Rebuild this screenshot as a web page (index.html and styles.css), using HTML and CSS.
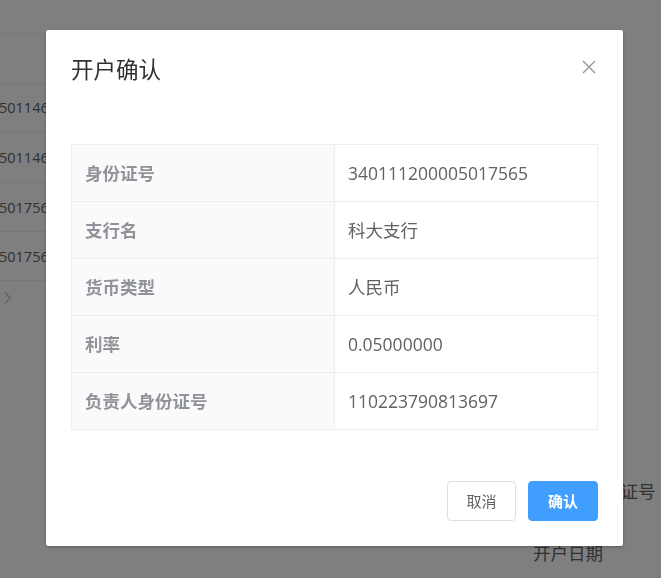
FILE: index.html
```html
<!DOCTYPE html>
<html lang="zh-CN">
<head>
<meta charset="utf-8">
<title>开户确认</title>
<link rel="stylesheet" href="styles.css">
</head>
<body>
<div class="page">
  <div class="list">
    <div class="list-row list-head"><span class="cell">账号</span></div>
    <div class="list-row"><span class="cell">501146</span></div>
    <div class="list-row"><span class="cell">501146</span></div>
    <div class="list-row"><span class="cell">501756</span></div>
    <div class="list-row"><span class="cell">501756</span></div>
    <div class="pager">
      <svg width="12" height="14" viewBox="0 0 12 14"><path d="M3 1.5 L8.5 7 L3 12.5" fill="none" stroke="#c0c4cc" stroke-width="1.4"/></svg>
    </div>
  </div>
  <div class="form">
    <div class="form-label">负责人身份证号</div>
    <div class="form-label">开户日期</div>
  </div>
</div>

<div class="mask"></div>

<div class="dialog">
  <div class="dialog-header">
    <span class="dialog-title">开户确认</span>
    <button class="dialog-close" aria-label="关闭">
      <svg width="14" height="14" viewBox="0 0 14 14"><path d="M1 1 L13 13 M13 1 L1 13" stroke="#909399" stroke-width="1.3" fill="none"/></svg>
    </button>
  </div>
  <div class="dialog-body">
    <table class="desc">
      <tr><th>身份证号</th><td>340111200005017565</td></tr>
      <tr><th>支行名</th><td>科大支行</td></tr>
      <tr><th>货币类型</th><td>人民币</td></tr>
      <tr><th>利率</th><td>0.05000000</td></tr>
      <tr><th>负责人身份证号</th><td>110223790813697</td></tr>
    </table>
  </div>
  <div class="dialog-footer">
    <button class="btn btn-default">取消</button>
    <button class="btn btn-primary">确认</button>
  </div>
</div>
</body>
</html>
```

FILE: styles.css
```css
* { box-sizing: border-box; }
html, body { margin: 0; padding: 0; }
body {
  width: 661px;
  height: 578px;
  overflow: hidden;
  background: #ffffff;
  font-family: "Open Sans", "Noto Sans CJK SC", sans-serif;
  color: #606266;
}

.page {
  display: flex;
  height: 578px;
}
.list {
  width: 533px;
  padding-top: 33px;
}
.list-row {
  height: 49.6px;
  border-top: 1px solid #ebeef5;
  display: flex;
  align-items: center;
  font-size: 14.5px;
  color: #606266;
  white-space: nowrap;
}
.list-row .cell { margin-left: -1px; }
.list-head .cell { visibility: hidden; }
.list-row:nth-child(5) { border-bottom: 1px solid #ebeef5; }
.pager {
  padding: 10px 0 0 2px;
  display: flex;
}
.form {
  padding-top: 478px;
  font-size: 17.5px;
  color: #606266;
  white-space: nowrap;
}
.form-label {
  height: 62px;
  line-height: 26px;
}

.mask {
  position: fixed;
  inset: 0;
  background: rgba(0, 0, 0, 0.5);
}

.dialog {
  position: fixed;
  left: 46px;
  top: 30px;
  width: 577px;
  background: #ffffff;
  border-radius: 2px;
  box-shadow: 0 1px 3px rgba(0, 0, 0, 0.3);
}
.dialog-header {
  padding: 25px 25px 12px;
  display: flex;
  justify-content: space-between;
  align-items: flex-start;
}
.dialog-title {
  font-size: 22.5px;
  line-height: 30px;
  color: #303133;
}
.dialog-close {
  border: 0;
  background: none;
  padding: 0;
  margin: 5px 2px 0 0;
  width: 14px;
  height: 14px;
  display: flex;
  cursor: pointer;
}
.dialog-body {
  padding: 47px 25px 38px;
}
.desc {
  width: 100%;
  border-collapse: collapse;
  table-layout: fixed;
  font-size: 17.5px;
}
.desc th, .desc td {
  border: 1px solid #ebeef5;
  height: 57px;
  padding: 0 13px;
  text-align: left;
  line-height: 24px;
}
.desc th {
  width: 263px;
  background: #fafafa;
  color: #909399;
  font-weight: 700;
}
.desc td {
  color: #606266;
  font-weight: 400;
}
.dialog-footer {
  padding: 13px 25px 25px;
  display: flex;
  justify-content: flex-end;
  gap: 12px;
}
.btn {
  height: 40px;
  padding: 0;
  font-family: inherit;
  font-size: 15px;
  line-height: 1;
  white-space: nowrap;
  border-radius: 4px;
  cursor: pointer;
  display: flex;
  align-items: center;
  justify-content: center;
}
.btn-default {
  background: #ffffff;
  border: 1px solid #dcdfe6;
  color: #606266;
  width: 69px;
}
.btn-primary {
  background: #409eff;
  border: 1px solid #409eff;
  color: #ffffff;
  font-weight: 600;
  width: 70px;
}
```
